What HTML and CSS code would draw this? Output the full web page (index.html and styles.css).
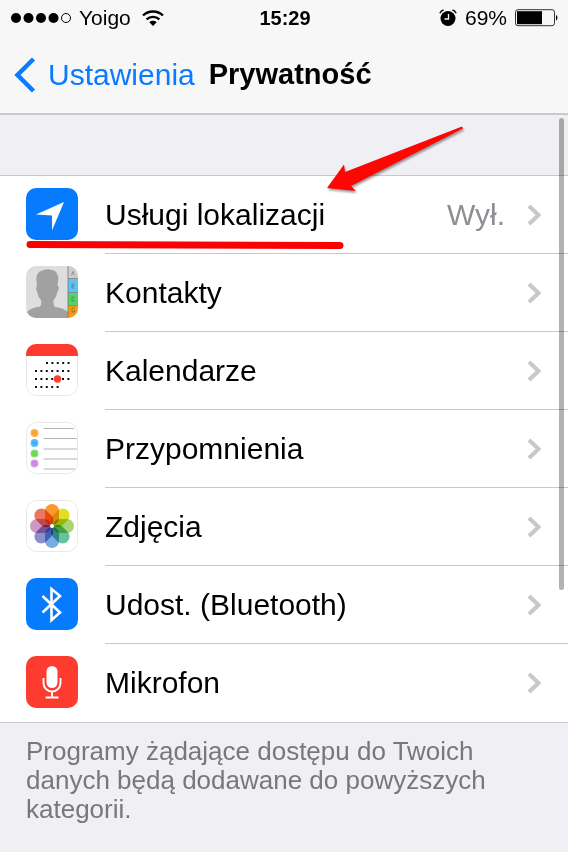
FILE: index.html
```html
<!DOCTYPE html>
<html lang="pl">
<head>
    <meta charset="UTF-8">
    <meta name="viewport" content="width=device-width, initial-scale=1.0">
    <title>Prywatność</title>
    <link rel="stylesheet" href="styles.css">
</head>
<body>
    <header class="top">
        <div class="status">
            <div class="status_left">
                <svg class="signal" width="60" height="12" viewBox="0 0 60 12">
                    <circle cx="5" cy="6" r="5"/>
                    <circle cx="17.500" cy="6" r="5"/>
                    <circle cx="30" cy="6" r="5"/>
                    <circle cx="42.500" cy="6" r="5"/>
                    <circle cx="55" cy="6" r="4.500" fill="none" stroke="#000"/>
                </svg>
                <span class="carrier">Yoigo</span>
                <svg width="22" height="16" viewBox="0 0 22 16">
                    <path d="M1 5.500a14.500 14.500 0 0 1 20 0M4.600 9.300a9.500 9.500 0 0 1 12.800 0" fill="none" stroke="#000" stroke-width="2.300"/>
                    <path d="M7.300 12.200a5.500 5.500 0 0 1 7.400 0L11 16z"/>
                </svg>
            </div>
            <time class="clock">15:29</time>
            <div class="status_right">
                <svg width="18" height="18" viewBox="0 0 18 18">
                    <circle cx="9" cy="9.500" r="7.500"/>
                    <path d="M.8 4.300Q2 1.700 4.500 1M13.500 1Q16 1.700 17.200 4.300" fill="none" stroke="#000" stroke-width="1.300"/>
                    <path d="M9.500 5v5H5.500" fill="none" stroke="#f7f7f8" stroke-width="1.300"/>
                </svg>
                <span class="percent">69%</span>
                <svg width="44" height="18" viewBox="0 0 44 18">
                    <rect x=".5" y=".7" width="39" height="16" rx="2.500" fill="none" stroke="#333"/>
                    <path d="M2 2.200h25v13H2z"/>
                    <path d="M41 5.700q3 3 0 6z"/>
                </svg>
            </div>
        </div>
        <nav class="bar">
            <a class="back" href="#">
                <svg width="22" height="36" viewBox="0 0 22 36">
                    <path d="M19.500 2L3.500 18l16 16" fill="none" stroke="#0a7aff" stroke-width="4.500"/>
                </svg>
                <span>Ustawienia</span>
            </a>
            <h1 class="heading">Prywatność</h1>
        </nav>
    </header>

    <main>
        <ul class="list">
            <li class="item">
                <svg class="icon" viewBox="0 0 52 52">
                    <rect width="52" height="52" rx="10" fill="#067bfe"/>
                    <path d="M38 14L26 42.500V27.500L10 26.500z" fill="#fff"/>
                </svg>
                <a class="row" href="#">
                    <span class="name">Usługi lokalizacji</span>
                    <span class="value">Wył.</span>
                    <svg class="chevron" viewBox="0 0 14 22"><path d="M2 2l9.500 9L2 20"/></svg>
                </a>
                <svg class="underline" viewBox="0 0 318 8">
                    <path d="M4 3.500L314 4.500" stroke="#fa0203" stroke-width="7" stroke-linecap="round"/>
                </svg>
                <svg class="arrow" viewBox="0 0 140 70">
                    <path d="M2 63L19 39.500L20 47L137 1.500L138 3.500L26 61L31 66z" fill="#fd0604"/>
                </svg>
            </li>
            <li class="item">
                <svg class="icon" viewBox="0 0 52 52">
                    <clipPath id="tile"><rect width="52" height="52" rx="10"/></clipPath>
                    <g clip-path="url(#tile)">
                        <path d="M0 0h52v52H0z" fill="#dedede"/>
                        <path d="M1 52V46Q4 42 14 40.500Q16 39 15 34Q12 31 11.500 27L10 22.500L11 19Q9 9 13 6Q21 1 29 5Q34 9 31.500 19L33 22L31 27Q30 32 27.500 34Q27 39 29 41Q38 42 42 46V52z" fill="#a1a1a1"/>
                        <path d="M42 0h10v12H42z" fill="#cfcdc9"/>
                        <path d="M42 13h10v13H42z" fill="#5ac5f5"/>
                        <path d="M42 27h10v12H42z" fill="#52d365"/>
                        <path d="M42 40h10v12H42z" fill="#f79810"/>
                        <path d="M42 0v52M42 12.500h10M42 26.500h10M42 39.500h10" stroke="#777" stroke-width=".8"/>
                        <path d="M45.500 9.500l1.500-4 1.500 4M46 18v4M46 18h2.500M46 20h2.500M46 22h2.500M48.500 31H46v4h2.500M48.500 42H46v4h2.500v-2" fill="none" stroke="#555" stroke-opacity=".5"/>
                    </g>
                </svg>
                <a class="row" href="#">
                    <span class="name">Kontakty</span>
                    <svg class="chevron" viewBox="0 0 14 22"><path d="M2 2l9.500 9L2 20"/></svg>
                </a>
            </li>
            <li class="item">
                <svg class="icon" viewBox="0 0 52 52">
                    <rect x=".5" y=".5" width="51" height="51" rx="10" fill="#fff" stroke="#e9e9e9"/>
                    <path d="M0 12V10A10 10 0 0 1 10 0H42A10 10 0 0 1 52 10V12z" fill="#ff3a2f"/>
                    <path d="M20 19h25M9 27h36M9 35h36M9 43h24" stroke="#111" stroke-width="2" stroke-dasharray="2 3.400"/>
                    <circle cx="31.500" cy="35" r="3.700" fill="#ff3a2f"/>
                </svg>
                <a class="row" href="#">
                    <span class="name">Kalendarze</span>
                    <svg class="chevron" viewBox="0 0 14 22"><path d="M2 2l9.500 9L2 20"/></svg>
                </a>
            </li>
            <li class="item">
                <svg class="icon" viewBox="0 0 52 52">
                    <rect x=".5" y=".5" width="51" height="51" rx="10" fill="#fff" stroke="#e9e9e9"/>
                    <path d="M17.500 6.500H48M17.500 16.500H51M17.500 27H51M17.500 37H51M17.500 47H49" stroke="#b5b5b5"/>
                    <g fill-opacity=".85" stroke-width="1.200">
                        <circle cx="8.500" cy="11" r="3.400" fill="#fb9110" stroke="#fbb65e"/>
                        <circle cx="8.500" cy="21" r="3.400" fill="#1ea4f5" stroke="#66c0f5"/>
                        <circle cx="8.500" cy="31.500" r="3.400" fill="#55d13c" stroke="#89df78"/>
                        <circle cx="8.500" cy="41.500" r="3.400" fill="#be76db" stroke="#d3a0e6"/>
                    </g>
                </svg>
                <a class="row" href="#">
                    <span class="name">Przypomnienia</span>
                    <svg class="chevron" viewBox="0 0 14 22"><path d="M2 2l9.500 9L2 20"/></svg>
                </a>
            </li>
            <li class="item">
                <svg class="icon" viewBox="0 0 52 52">
                    <rect x=".5" y=".5" width="51" height="51" rx="10" fill="#fff" stroke="#e9e9e9"/>
                    <g class="petals">
                        <rect x="19" y="4" width="14" height="21" rx="7" fill="#fb9a2c"/>
                        <rect x="19" y="4" width="14" height="21" rx="7" fill="#e0df20" transform="rotate(45 26 26)"/>
                        <rect x="19" y="4" width="14" height="21" rx="7" fill="#a8d477" transform="rotate(90 26 26)"/>
                        <rect x="19" y="4" width="14" height="21" rx="7" fill="#66c29c" transform="rotate(135 26 26)"/>
                        <rect x="19" y="4" width="14" height="21" rx="7" fill="#76aee3" transform="rotate(180 26 26)"/>
                        <rect x="19" y="4" width="14" height="21" rx="7" fill="#8e8ecb" transform="rotate(225 26 26)"/>
                        <rect x="19" y="4" width="14" height="21" rx="7" fill="#cf97c4" transform="rotate(270 26 26)"/>
                        <rect x="19" y="4" width="14" height="21" rx="7" fill="#f0755c" transform="rotate(315 26 26)"/>
                    </g>
                    <circle cx="26" cy="26" r="2" fill="#fff"/>
                </svg>
                <a class="row" href="#">
                    <span class="name">Zdjęcia</span>
                    <svg class="chevron" viewBox="0 0 14 22"><path d="M2 2l9.500 9L2 20"/></svg>
                </a>
            </li>
            <li class="item">
                <svg class="icon" viewBox="0 0 52 52">
                    <rect width="52" height="52" rx="10" fill="#067bfe"/>
                    <path d="M16.500 18L34 34.500L25.500 42V11L34 18L16.500 34.500" fill="none" stroke="#fff" stroke-width="2.600"/>
                </svg>
                <a class="row" href="#">
                    <span class="name">Udost. (Bluetooth)</span>
                    <svg class="chevron" viewBox="0 0 14 22"><path d="M2 2l9.500 9L2 20"/></svg>
                </a>
            </li>
            <li class="item">
                <svg class="icon" viewBox="0 0 52 52">
                    <rect width="52" height="52" rx="10" fill="#fd3b2f"/>
                    <rect x="20.500" y="10" width="11" height="22" rx="5.500" fill="#fff"/>
                    <path d="M17.500 22v5a8.500 8.500 0 0 0 17 0V22M26 35.500V41M19.500 41.500h13" fill="none" stroke="#fff" stroke-width="1.900"/>
                </svg>
                <a class="row" href="#">
                    <span class="name">Mikrofon</span>
                    <svg class="chevron" viewBox="0 0 14 22"><path d="M2 2l9.500 9L2 20"/></svg>
                </a>
            </li>
        </ul>
        <p class="note">Programy żądające dostępu do Twoich danych będą dodawane do powyższych kategorii.</p>
    </main>
    <div class="scroll"></div>
</body>
</html>
```

FILE: styles.css
```css
*{
    margin: 0;
    padding: 0;
    box-sizing: border-box;
}

body{
    position: relative;
    min-height: 100vh;
    background-color: #efeff4;
    font-family: "Liberation Sans", Arial, sans-serif;
    color: #000;
}

svg{
    display: block;
    flex-shrink: 0;
}

a{
    color: inherit;
    text-decoration: none;
}

.top{
    background-color: #f7f7f8;
    border-bottom: 2px solid #c9c9cd;
}

.status{
    display: grid;
    grid-template-columns: 1fr auto 1fr;
    align-items: center;
    height: 36px;
    padding: 0 9px 0 11px;
    font-size: 21px;
}

.status_left, .status_right{
    display: flex;
    align-items: center;
}

.status_right{
    justify-content: flex-end;
    gap: 8px;
}

.carrier{
    padding: 0 11px 0 8px;
}

.clock{
    font-size: 20px;
    font-weight: bold;
}

.bar{
    display: flex;
    align-items: center;
    height: 77px;
    padding: 0 14px;
    font-size: 30px;
}

.back{
    display: flex;
    align-items: center;
    gap: 12px;
    color: #0a7aff;
}

.heading{
    margin-left: 14px;
    font-size: 29px;
}

.list{
    margin-top: 60px;
    list-style: none;
    background-color: #fff;
    border-top: 1px solid #c8c7cc;
    border-bottom: 1px solid #c8c7cc;
}

.item{
    position: relative;
    display: flex;
    align-items: center;
    padding-left: 26px;
}

.icon{
    width: 52px;
    height: 52px;
    margin: 0 27px 2px 0;
}

.row{
    display: flex;
    align-items: center;
    flex: 1;
    height: 78px;
    padding-right: 27px;
    border-bottom: 1px solid #c8c7cc;
    font-size: 30px;
}

.item:last-child .row{
    border-bottom: none;
}

.name{
    flex: 1;
}

.value{
    margin-right: 22px;
    color: #8e8e93;
}

.chevron{
    width: 14px;
    height: 22px;
    fill: none;
    stroke: #c7c7cc;
    stroke-width: 4;
}

.petals{
    isolation: isolate;
}

.petals rect{
    mix-blend-mode: multiply;
}

/* red marks over the first row */
.underline, .arrow{
    position: absolute;
    pointer-events: none;
}

.underline{
    left: 26px;
    bottom: 5px;
    width: 318px;
    height: 8px;
}

.arrow{
    left: 325px;
    top: -51px;
    width: 140px;
    height: 70px;
    filter: drop-shadow(1px 2px 1px rgba(0, 0, 0, 0.4));
}

.note{
    padding: 14px 70px 28px 26px;
    font-size: 26px;
    line-height: 29px;
    color: #77777c;
}

.scroll{
    position: absolute;
    top: 118px;
    right: 4px;
    width: 5px;
    height: 472px;
    border-radius: 3px;
    background-color: rgba(0, 0, 0, 0.3);
}
```
